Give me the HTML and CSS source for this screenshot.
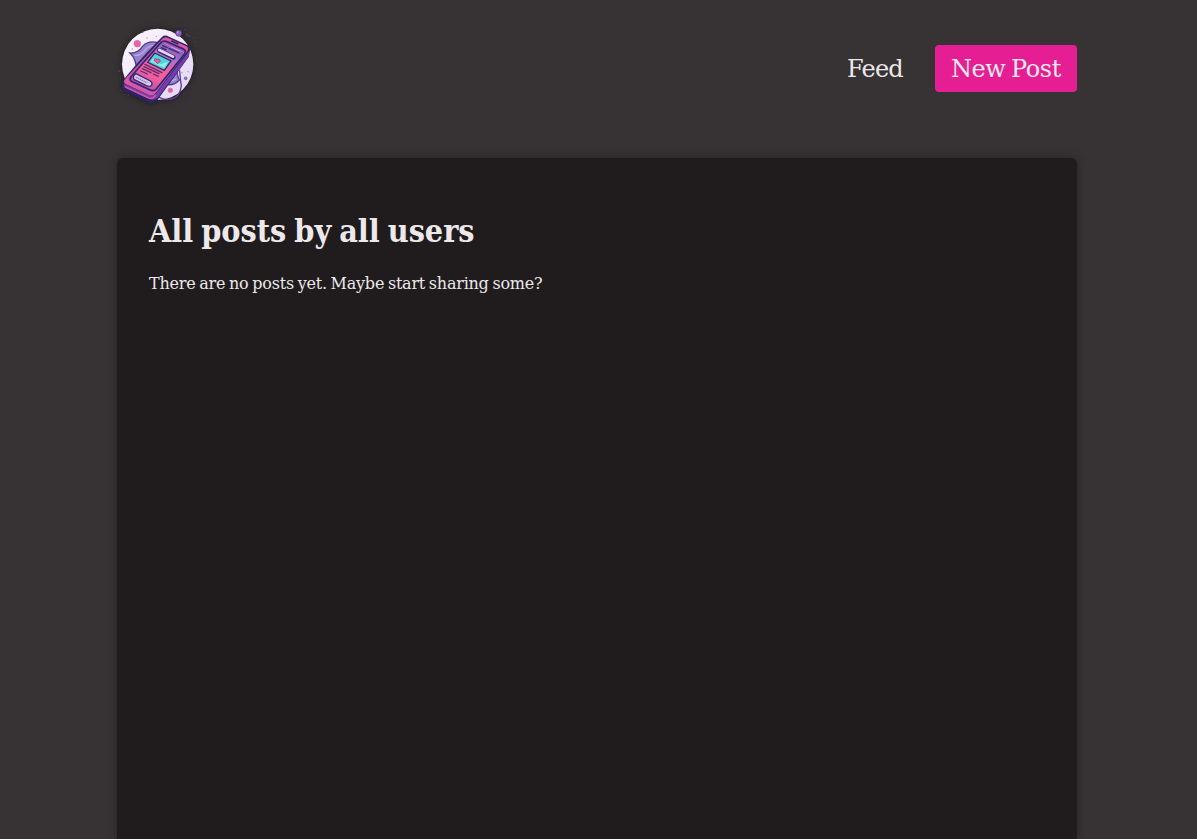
FILE: index.html
```html
<!DOCTYPE html>
<html lang="en">
<head>
<meta charset="utf-8">
<title>All posts</title>
<link rel="stylesheet" href="styles.css">
</head>
<body>
<header class="header">
  <a class="logo" aria-label="Home">
    <svg viewBox="21 12 240 240" width="80" height="80">
      <defs>
        <linearGradient id="body" x1="0" y1="1" x2="1" y2="0"><stop offset="0" stop-color="#ee5c9f"/><stop offset=".45" stop-color="#b453b5"/><stop offset="1" stop-color="#eb579f"/></linearGradient>
        <linearGradient id="screen" x1=".8" y1="0" x2=".2" y2="1"><stop offset="0" stop-color="#7455b1"/><stop offset=".28" stop-color="#a772ca"/><stop offset=".5" stop-color="#f26198"/><stop offset=".72" stop-color="#ee5e9d"/><stop offset="1" stop-color="#9252b5"/></linearGradient>
        <linearGradient id="disc" x1="0" y1="0" x2="1" y2="1"><stop offset="0" stop-color="#fff8ff"/><stop offset="1" stop-color="#e2d3f6"/></linearGradient>
      </defs>
      <circle cx="143" cy="133" r="107" fill="url(#disc)"/>
      <path d="M60 99Q82 101 98 79Q112 62 141 67L204 143Q198 160 208 180Q190 200 164 192L80 158Q81 118 60 99Z" fill="#9582cb" stroke="#503b96" stroke-width="4"/>
      <path d="M73 106Q95 108 106 89Q118 76 136 76M168 181Q183 188 198 176" fill="none" stroke="#bca9e2" stroke-width="4"/>
      <path d="M209 151Q211 180 214 196Q211 232 184 237Q154 242 138 224" fill="none" stroke="#603894" stroke-width="4"/>
      <path d="M156 51Q164 43 177 50L233 76Q243 83 239 94L236 111L142 241Q131 254 116 248L44 214Q34 206 37 184Q78 131 133 74Z" fill="#2d2464"/>
      <path d="M238 92L237 109L145 231Q132 245 115 235L43 202L41 191L117 225Q131 231 141 216Z" fill="#733dac"/>
      <path d="M157 56Q165 48 175 54L229 79Q238 84 231 95L139 217Q130 231 117 225L47 192Q38 185 46 176Z" fill="url(#body)"/>
      <path d="M45 200L116 234Q128 238 138 225" fill="none" stroke="#d453a5" stroke-width="5"/>
      <path d="M153 67Q160 60 172 65L222 88Q230 93 224 101L139 207Q131 215 121 210L64 184Q57 178 63 170Z" fill="url(#screen)" stroke="#35246d" stroke-width="5"/>
      <path d="M184 62L205 72" stroke="#352361" stroke-width="5"/>
      <path d="M163 70L222 98" stroke="#ed67b3" stroke-width="3"/>
      <path d="M158 77L171 83M177 85L207 99M154 83L168 89" stroke="#3a286d" stroke-width="4" stroke-linecap="round"/>
      <path d="M183 81L211 93" stroke="#c59be3" stroke-width="4"/>
      <path d="M148 91L190 112" stroke="#37276f" stroke-width="14" stroke-linecap="round"/>
      <path d="M148 90L189 110" stroke="#e4d9f3" stroke-width="8" stroke-linecap="round"/>
      <path d="M134 99L183 123L163 151L113 127Z" fill="#51d5dc" stroke="#39276f" stroke-width="4"/>
      <path d="M121 124L131 115L141 127L153 132L174 125L163 143Z" fill="#8eede6"/>
      <path d="M144 131L132 122Q133 113 142 118Q149 116 151 123Z" fill="#ee6090" stroke="#673979" stroke-width="2"/>
      <path d="M105 133L156 158M102 140L147 161M97 146L123 158M130 162L145 169M92 153L112 162" stroke="#5f2d76" stroke-width="4" stroke-linecap="round"/>
      <path d="M78 161L121 183Q130 190 123 197Q118 201 109 197L73 179Q65 170 78 161Z" fill="#d4caed" stroke="#3b286f" stroke-width="4"/>
      <path d="M79 172L112 189" stroke="#8875af" stroke-width="4" stroke-dasharray="4 2"/>
      <g stroke-width="2">
        <circle cx="82" cy="71" r="10" fill="#ed609e" stroke="#d975b8"/>
        <circle cx="181" cy="211" r="7" fill="#e76399" stroke="#ce78b2"/>
        <circle cx="206" cy="40" r="9" fill="#8c5fc2" stroke="#593b8c"/>
        <circle cx="203" cy="37" r="3" fill="#c094dd"/>
        <circle cx="227" cy="175" r="4" fill="#9b87cc" stroke="#50408a"/>
      </g>
      <g fill="#47416d">
        <circle cx="98" cy="36" r="2.5"/><circle cx="110" cy="28" r="2"/><circle cx="135" cy="22" r="2"/><circle cx="231" cy="44" r="3.5"/><circle cx="238" cy="49" r="3"/><circle cx="225" cy="29" r="2"/><circle cx="251" cy="54" r="2"/><circle cx="256" cy="65" r="2"/><circle cx="31" cy="132" r="2"/><circle cx="27" cy="153" r="3"/><circle cx="31" cy="176" r="2"/><circle cx="32" cy="211" r="2"/><circle cx="41" cy="223" r="2"/><circle cx="56" cy="225" r="2"/><circle cx="222" cy="220" r="2"/>
      </g>
      <g fill="#9a83cc"><circle cx="67" cy="87" r="2"/><circle cx="111" cy="54" r="2"/><circle cx="139" cy="49" r="2"/><circle cx="234" cy="155" r="2"/><circle cx="216" cy="158" r="2"/></g>
    </svg>
  </a>
  <nav class="nav">
    <a class="nav-link">Feed</a>
    <a class="cta">New Post</a>
  </nav>
</header>
<main class="main">
  <h1 class="title">All posts by all users</h1>
  <p class="message">There are no posts yet. Maybe start sharing some?</p>
</main>
</body>
</html>
```
FILE: styles.css
```css
* { box-sizing: border-box; }
body {
  display: flex;
  flex-direction: column;
  margin: 0;
  height: 100vh;
  overflow: hidden;
  background: #373233;
  color: #ede8ea;
  font-family: "DejaVu Serif", serif;
}
.header {
  display: flex;
  flex: none;
  align-items: center;
  justify-content: space-between;
  width: 960px;
  height: 80px;
  margin: 24px 0 0 117px;
}
.logo { display: flex; filter: drop-shadow(0 0 3px rgba(0, 0, 0, .5)); }
.nav { display: flex; align-items: center; gap: 32px; font-size: 24px; line-height: 48px; margin-top: 9px; }
.nav-link { width: 56px; height: 47px; white-space: nowrap; letter-spacing: -.8px; }
.cta { width: 142px; height: 47px; padding-left: 16px; white-space: nowrap; letter-spacing: -.45px; word-spacing: -1.5px; border-radius: 4px; background: #e51f93; }
.main {
  flex: 1;
  width: 960px;
  margin: 54px 0 0 117px;
  padding: 51px 32px 0;
  border-radius: 6px 6px 0 0;
  background: #201c1d;
  box-shadow: 0 0 8px rgba(0, 0, 0, .3);
}
.title { margin: 0; font-family: "DejaVu Serif Condensed", "DejaVu Serif", serif; font-stretch: condensed; font-size: 32px; line-height: 44px; word-spacing: -2px; }
.message { margin: 20px 0 0; font-size: 16px; line-height: 22px; letter-spacing: -.22px; word-spacing: -1.1px; }
```
